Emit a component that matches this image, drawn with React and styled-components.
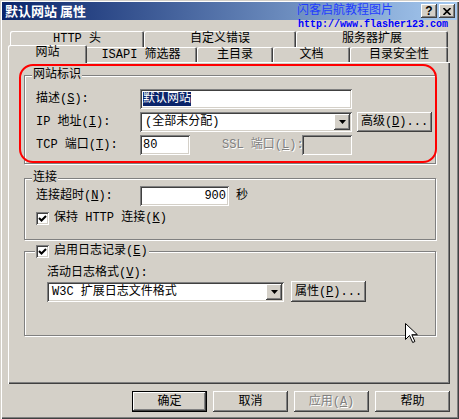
import styled, { createGlobalStyle } from 'styled-components'

const GlobalStyle = createGlobalStyle`
  html, body {
    margin: 0;
    padding: 0;
    background: #d4d0c8;
    overflow: hidden;
  }
  body {
    font-family: "Liberation Mono", "Noto Sans CJK SC", monospace;
    font-size: 12px;
    line-height: 14px;
    color: #000;
  }
`

const raised = `
  box-shadow: inset -1px -1px #404040, inset 1px 1px #ffffff,
    inset -2px -2px #808080, inset 2px 2px #d4d0c8;
`
const sunken = `
  box-shadow: inset 1px 1px #808080, inset -1px -1px #ffffff,
    inset 2px 2px #404040, inset -2px -2px #d4d0c8;
`

const backTabs = [
  { label: 'HTTP 头', w: 134 },
  { label: '自定义错误', w: 152 },
  { label: '服务器扩展', w: 152 },
]

const frontTabs = [
  { label: '网站', w: 75, selected: true },
  { label: 'ISAPI 筛选器', w: 112 },
  { label: '主目录', w: 76 },
  { label: '文档', w: 77 },
  { label: '目录安全性', w: 98 },
]

const DropArrow = () => (
  <DropButton>
    <svg width="7" height="4" viewBox="0 0 7 4">
      <path d="M0 0h7L3.5 4z" fill="#000" />
    </svg>
  </DropButton>
)

const Check = () => (
  <CheckBox>
    <svg width="9" height="9" viewBox="0 0 9 9">
      <path d="M1 4l2.5 2.5L8 2" fill="none" stroke="#000" strokeWidth="2" />
    </svg>
  </CheckBox>
)

const App = () => {
  return (
    <>
      <GlobalStyle />
      <Window>
        <TitleBar>
          <Title>默认网站 属性</Title>
          <CapButtons>
            <CapButton>?</CapButton>
            <CapButton>
              <svg width="8" height="7" viewBox="0 0 8 7">
                <path d="M0.5 0l7 7M7.5 0l-7 7" stroke="#000" strokeWidth="1.6" />
              </svg>
            </CapButton>
          </CapButtons>
        </TitleBar>

        <Client>
          <TabStrip>
            <TabRow $h={16}>
              {backTabs.map((t) => (
                <Tab key={t.label} $w={t.w} $h={16}>
                  {t.label}
                </Tab>
              ))}
            </TabRow>
            <TabRow $h={15}>
              {frontTabs.map((t) => (
                <Tab key={t.label} $w={t.w} $h={15} $selected={t.selected}>
                  {t.label}
                </Tab>
              ))}
            </TabRow>
          </TabStrip>

          <Panel>
            <Group $pad="7px 10px 8px 0">
              <Legend $ml={7}>网站标识</Legend>
              <GroupBody $inset={11}>
                <Rows>
                  <Row>
                    <Label>
                      描述(<u>S</u>):
                    </Label>
                    <Field $w={212}>
                      <Selected>默认网站</Selected>
                    </Field>
                  </Row>
                  <Row>
                    <Label>
                      IP 地址(<u>I</u>):
                    </Label>
                    <Combo $w={212}>
                      <ComboText>(全部未分配)</ComboText>
                      <DropArrow />
                    </Combo>
                    <Button $ml={5} $h={20}>
                      高级(<u>D</u>)...
                    </Button>
                  </Row>
                  <Row>
                    <Label>
                      TCP 端口(<u>T</u>):
                    </Label>
                    <Field $w={50}>80</Field>
                    <Label $w={80} $ml={32} $disabled>
                      SSL 端口(<u>L</u>):
                    </Label>
                    <Field $w={50} $disabled />
                  </Row>
                </Rows>
              </GroupBody>
            </Group>

            <Group $mt={7} $pad="1px 10px 13px 0">
              <Legend $ml={7}>连接</Legend>
              <GroupBody $inset={11}>
                <Row>
                  <Label>
                    连接超时(<u>N</u>):
                  </Label>
                  <Field $w={89} $right>
                    900
                  </Field>
                  <Unit>秒</Unit>
                </Row>
                <CheckRow>
                  <Check />
                  <span>
                    保持 HTTP 连接(<u>K</u>)
                  </span>
                </CheckRow>
              </GroupBody>
            </Group>

            <Group $mt={4} $pad="8px 10px 33px 0">
              <Legend $ml={10}>
                <Check />
                <span>
                  启用日志记录(<u>E</u>)
                </span>
              </Legend>
              <GroupBody $inset={22}>
                <FieldCaption>
                  活动日志格式(<u>V</u>):
                </FieldCaption>
                <Row $h={21}>
                  <Combo $w={237}>
                    <ComboText>W3C 扩展日志文件格式</ComboText>
                    <DropArrow />
                  </Combo>
                  <Button $ml={7}>
                    属性(<u>P</u>)...
                  </Button>
                </Row>
              </GroupBody>
            </Group>
          </Panel>

          <ButtonBar>
            <Button $default>确定</Button>
            <Button>取消</Button>
            <Button $disabled>
              应用(<u>A</u>)
            </Button>
            <Button>帮助</Button>
          </ButtonBar>
        </Client>

        <Watermark>
          <WatermarkTitle>闪客启航教程图片</WatermarkTitle>
          <WatermarkUrl>http://www.flasher123.com</WatermarkUrl>
        </Watermark>

        <Highlight />

        <Cursor width="13" height="21" viewBox="0 0 13 21">
          <path
            d="M0.5 0.5v16l4-4 3.2 7 2.2-1-3.1-6.8h5.6z"
            fill="#fff"
            stroke="#000"
            strokeWidth="1"
            strokeLinejoin="miter"
          />
        </Cursor>
      </Window>
    </>
  )
}

const Window = styled.div`
  position: relative;
  box-sizing: border-box;
  width: 459px;
  height: 419px;
  padding: 2px;
  background: #d4d0c8;
  box-shadow: inset 1px 1px #d4d0c8, inset 2px 2px #ffffff,
    inset -1px -1px #404040, inset -2px -2px #808080;
`

const TitleBar = styled.div`
  height: 18px;
  display: flex;
  align-items: center;
  justify-content: space-between;
  padding: 0 2px;
  background: linear-gradient(to right, #0a246a, #a6caf0);
`

const Title = styled.div`
  padding-left: 1px;
  color: #fff;
  font-family: "Noto Sans CJK SC", sans-serif;
  font-weight: bold;
  font-size: 13px;
  line-height: 14px;
`

const CapButtons = styled.div`
  display: flex;
  gap: 2px;
`

const CapButton = styled.div`
  width: 16px;
  height: 14px;
  display: flex;
  align-items: center;
  justify-content: center;
  background: #d4d0c8;
  font-family: "Liberation Sans", sans-serif;
  font-weight: bold;
  font-size: 12px;
  line-height: 12px;
  ${raised}
`

const Client = styled.div`
  padding: 11px 7px 0 6px;
`

const TabStrip = styled.div`
  display: flex;
  flex-direction: column;
  padding-left: 2px;
`

const TabRow = styled.div`
  display: flex;
  align-items: flex-end;
  height: ${(p) => p.$h}px;
`

const Tab = styled.div`
  box-sizing: border-box;
  flex: none;
  width: ${(p) => p.$w + (p.$selected ? 4 : 0)}px;
  height: ${(p) => (p.$selected ? 18 : p.$h)}px;
  margin: 0 ${(p) => (p.$selected ? -2 : 0)}px ${(p) => (p.$selected ? -1 : 0)}px;
  z-index: ${(p) => (p.$selected ? 1 : 0)};
  padding-top: 1px;
  text-align: center;
  white-space: nowrap;
  background: #d4d0c8;
  border-radius: 2px 2px 0 0;
  box-shadow: inset 1px 1px #ffffff, inset -1px 0 #404040, inset -2px 0 #808080;
`

const Panel = styled.div`
  box-sizing: border-box;
  height: 322px;
  padding: 6px 14px 0 16px;
  display: flex;
  flex-direction: column;
  box-shadow: inset 1px 1px #ffffff, inset -1px -1px #404040,
    inset -2px -2px #808080;
`

const Group = styled.fieldset`
  margin: ${(p) => p.$mt || 0}px 0 0;
  padding: ${(p) => p.$pad};
  min-width: 0;
  border: 1px solid #808080;
  box-shadow: inset 1px 1px #ffffff, 1px 1px #ffffff;
`

const Legend = styled.legend`
  display: flex;
  align-items: center;
  gap: 5px;
  height: 14px;
  margin: 0 0 0 ${(p) => p.$ml}px;
  padding: 0 1px;
  background: #d4d0c8;
`

const GroupBody = styled.div`
  padding-left: ${(p) => p.$inset}px;
`

const Rows = styled.div`
  display: flex;
  flex-direction: column;
  gap: 3px;
`

const Row = styled.div`
  display: flex;
  align-items: center;
  height: ${(p) => p.$h || 20}px;
`

const Label = styled.div`
  flex: none;
  width: ${(p) => p.$w || 104}px;
  margin-left: ${(p) => p.$ml || 0}px;
  white-space: nowrap;
  color: ${(p) => (p.$disabled ? '#808080' : '#000')};
  text-shadow: ${(p) => (p.$disabled ? '1px 1px #ffffff' : 'none')};
`

const Field = styled.div`
  box-sizing: border-box;
  flex: none;
  width: ${(p) => p.$w}px;
  height: 20px;
  padding: 3px 3px 0;
  text-align: ${(p) => (p.$right ? 'right' : 'left')};
  white-space: nowrap;
  background: ${(p) => (p.$disabled ? '#d4d0c8' : '#ffffff')};
  ${sunken}
`

const Selected = styled.span`
  background: #0a246a;
  color: #fff;
`

const Combo = styled.div`
  box-sizing: border-box;
  flex: none;
  display: flex;
  align-items: center;
  width: ${(p) => p.$w}px;
  height: 20px;
  padding: 2px;
  background: #fff;
  ${sunken}
`

const ComboText = styled.div`
  flex: 1;
  padding-left: 3px;
  white-space: nowrap;
`

const DropButton = styled.div`
  flex: none;
  width: 16px;
  height: 16px;
  display: flex;
  align-items: center;
  justify-content: center;
  background: #d4d0c8;
  ${raised}
`

const Unit = styled.span`
  margin-left: 7px;
`

const CheckRow = styled.div`
  display: flex;
  align-items: center;
  gap: 5px;
  height: 16px;
  margin-top: 4px;
`

const CheckBox = styled.div`
  box-sizing: border-box;
  flex: none;
  width: 13px;
  height: 13px;
  display: flex;
  align-items: center;
  justify-content: center;
  background: #fff;
  ${sunken}
`

const FieldCaption = styled.div`
  margin-bottom: 1px;
`

const Button = styled.div`
  box-sizing: border-box;
  flex: none;
  width: 75px;
  height: ${(p) => p.$h || 21}px;
  margin-left: ${(p) => p.$ml || 0}px;
  display: flex;
  align-items: center;
  justify-content: center;
  white-space: nowrap;
  background: #d4d0c8;
  border: ${(p) => (p.$default ? '1px solid #000' : 'none')};
  color: ${(p) => (p.$disabled ? '#808080' : '#000')};
  text-shadow: ${(p) => (p.$disabled ? '1px 1px #ffffff' : 'none')};
  ${raised}
`

const ButtonBar = styled.div`
  display: flex;
  justify-content: flex-end;
  gap: 6px;
  margin-top: 7px;
`

const Watermark = styled.div`
  position: absolute;
  left: 297px;
  top: 2px;
  color: #1f3cff;
`

const WatermarkTitle = styled.div`
  font-family: "Noto Sans CJK SC", sans-serif;
  font-size: 12px;
  line-height: 14px;
`

const WatermarkUrl = styled.div`
  margin-top: 4px;
  margin-left: 1px;
  font-family: "Liberation Mono", monospace;
  font-size: 10px;
  font-weight: bold;
  line-height: 10px;
  color: #0000ff;
`

const Highlight = styled.div`
  position: absolute;
  left: 19px;
  top: 64px;
  width: 418px;
  height: 99px;
  box-sizing: border-box;
  border: 2px solid #ff0000;
  border-radius: 14px;
  pointer-events: none;
`

const Cursor = styled.svg`
  position: absolute;
  left: 405px;
  top: 323px;
`

export default App
